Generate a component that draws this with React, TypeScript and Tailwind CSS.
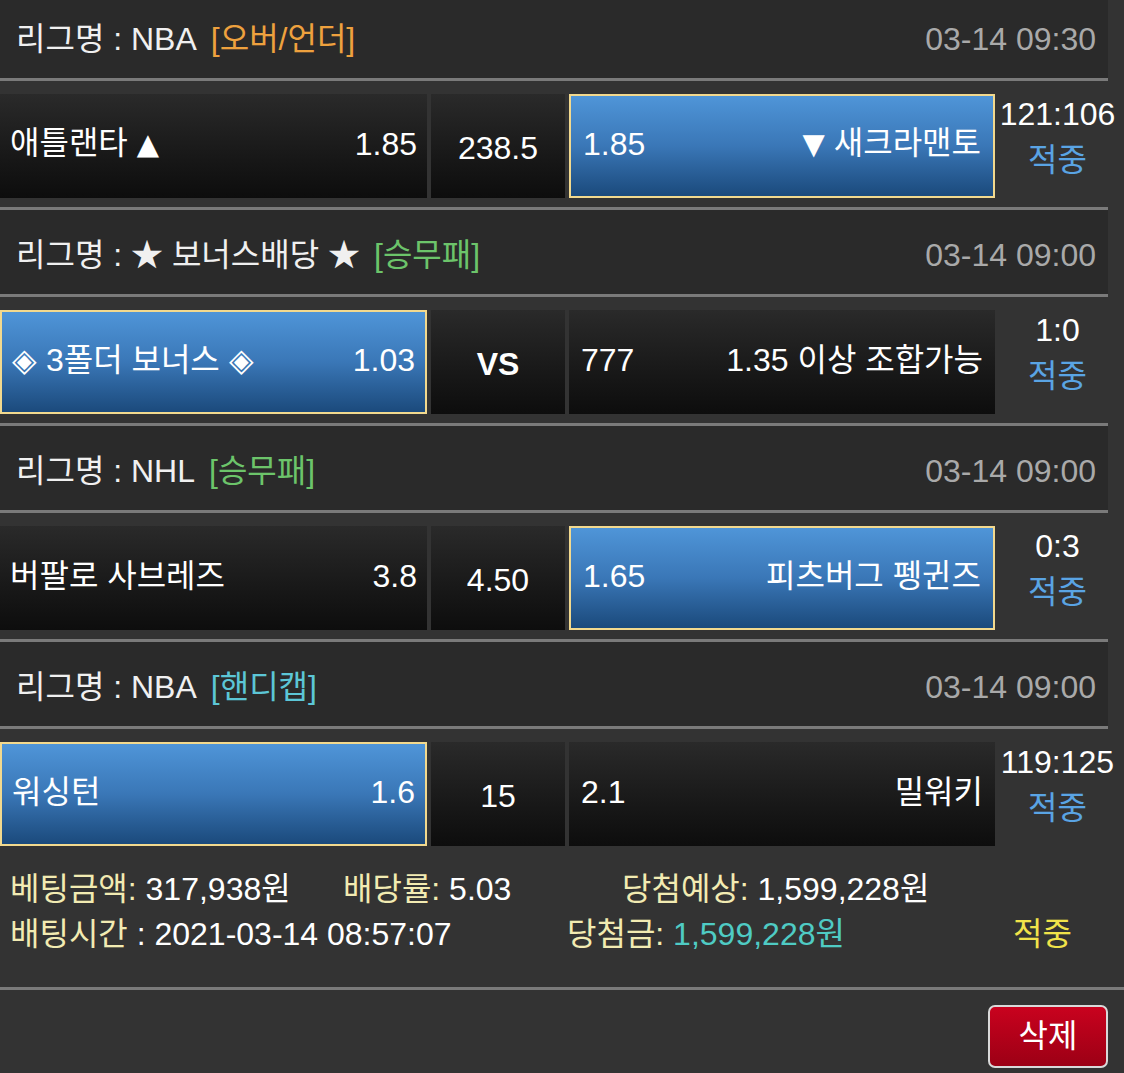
type Match = {
  league: string;
  tag: string;
  tagClass: string;
  date: string;
  home: string;
  homeOdds: string;
  mid: string;
  awayOdds: string;
  away: string;
  pick: "home" | "away";
  score: string;
};

const matches: Match[] = [
  {
    league: "리그명 : NBA",
    tag: "[오버/언더]",
    tagClass: "text-[#eea13e]",
    date: "03-14 09:30",
    home: "애틀랜타 ▲",
    homeOdds: "1.85",
    mid: "238.5",
    awayOdds: "1.85",
    away: "▼ 새크라맨토",
    pick: "away",
    score: "121:106",
  },
  {
    league: "리그명 : ★ 보너스배당 ★",
    tag: "[승무패]",
    tagClass: "text-[#6cc46a]",
    date: "03-14 09:00",
    home: "◈ 3폴더 보너스 ◈",
    homeOdds: "1.03",
    mid: "VS",
    awayOdds: "777",
    away: "1.35 이상 조합가능",
    pick: "home",
    score: "1:0",
  },
  {
    league: "리그명 : NHL",
    tag: "[승무패]",
    tagClass: "text-[#6cc46a]",
    date: "03-14 09:00",
    home: "버팔로 사브레즈",
    homeOdds: "3.8",
    mid: "4.50",
    awayOdds: "1.65",
    away: "피츠버그 펭귄즈",
    pick: "away",
    score: "0:3",
  },
  {
    league: "리그명 : NBA",
    tag: "[핸디캡]",
    tagClass: "text-[#5cc6d6]",
    date: "03-14 09:00",
    home: "워싱턴",
    homeOdds: "1.6",
    mid: "15",
    awayOdds: "2.1",
    away: "밀워키",
    pick: "home",
    score: "119:125",
  },
];

const darkCell = "bg-linear-to-b from-[#2a2a2a] to-[#0d0d0d]";
const blueCell =
  "border-2 border-[#f2d98e] bg-linear-to-b from-[#4f95d8] via-[#3a77b7] to-[#1b4a7c]";

// the ▲ ▼ glyphs come out tiny in Liberation, take them from DejaVu
function Team({ name }: { name: string }) {
  const parts = name.split(/([▲▼])/);
  return (
    <>
      {parts.map((p, i) =>
        p === "▲" || p === "▼" ? (
          <span key={i} className="font-['DejaVu_Sans'] text-[29px]">
            {p}
          </span>
        ) : (
          p
        )
      )}
    </>
  );
}

function Sep({ full = false }: { full?: boolean }) {
  return <div className={full ? "h-[3px] w-full bg-[#7a7a7a]" : "h-[3px] w-[1108px] bg-[#7a7a7a]"} />;
}

function MatchBlock({ m, last }: { m: Match; last: boolean }) {
  return (
    <div>
      <div className="flex h-[84px] w-[1108px] items-center justify-between bg-[#2a2a2a] pl-4 pr-3 pt-[6px]">
        <p className="text-[#f0f0f0]">
          {m.league}
          <span className={`ml-[14px] ${m.tagClass}`}>{m.tag}</span>
        </p>
        <p className="text-[#a9a9a9]">{m.date}</p>
      </div>
      <Sep />
      <div className="flex h-[126px] pb-[9px] pt-[13px]">
        <div
          className={`flex w-[427px] items-center justify-between pb-1 pl-[10px] pr-[10px] text-white ${
            m.pick === "home" ? blueCell : darkCell
          }`}
        >
          <span>
            <Team name={m.home} />
          </span>
          <span>{m.homeOdds}</span>
        </div>
        <div
          className={`ml-1 flex w-[134px] items-center justify-center pt-1 text-white ${darkCell} ${
            m.mid === "VS" ? "font-bold" : ""
          }`}
        >
          {m.mid}
        </div>
        <div
          className={`ml-1 flex w-[426px] items-center justify-between px-3 pb-1 text-white ${
            m.pick === "away" ? blueCell : darkCell
          }`}
        >
          <span>{m.awayOdds}</span>
          <span>
            <Team name={m.away} />
          </span>
        </div>
        <div className="flex flex-1 flex-col items-center justify-center pb-[18px] pr-1 leading-[46px]">
          <span className="text-white">{m.score}</span>
          <span className="text-[#5aa4e4]">적중</span>
        </div>
      </div>
      {!last && <Sep />}
    </div>
  );
}

export default function App() {
  return (
    <main
      className="min-h-screen overflow-hidden bg-[#333333] text-[32px] leading-[45px]"
      style={{ fontFamily: '"Liberation Sans", "Noto Sans CJK KR", sans-serif' }}
    >
      <div className="-mt-[6px]">
        {matches.map((m, i) => (
          <MatchBlock key={i} m={m} last={i === matches.length - 1} />
        ))}
      </div>

      <section className="pb-[30px] pl-[10px] pt-[12px]">
        <div className="flex">
          <p className="w-[333px] text-white">
            <span className="text-[#f2ebb2]">베팅금액:</span> 317,938원
          </p>
          <p className="w-[279px] text-white">
            <span className="text-[#f2ebb2]">배당률:</span> 5.03
          </p>
          <p className="text-white">
            <span className="text-[#f2ebb2]">당첨예상:</span> 1,599,228원
          </p>
        </div>
        <div className="flex">
          <p className="w-[557px] text-white">
            <span className="text-[#f2ebb2]">배팅시간</span> : 2021-03-14 08:57:07
          </p>
          <p className="w-[446px] text-[#f2ebb2]">
            당첨금: <span className="text-[#4fcbc4]">1,599,228원</span>
          </p>
          <p className="text-[#f1e34a]">적중</p>
        </div>
      </section>

      <Sep full />

      <div className="flex justify-end pr-4 pt-[15px]">
        <button
          type="button"
          className="flex h-[63px] w-[120px] items-center justify-center rounded-[7px] border-2 border-[#d9d9d9] bg-linear-to-b from-[#c9021e] to-[#9c0015] text-white"
        >
          삭제
        </button>
      </div>
    </main>
  );
}
